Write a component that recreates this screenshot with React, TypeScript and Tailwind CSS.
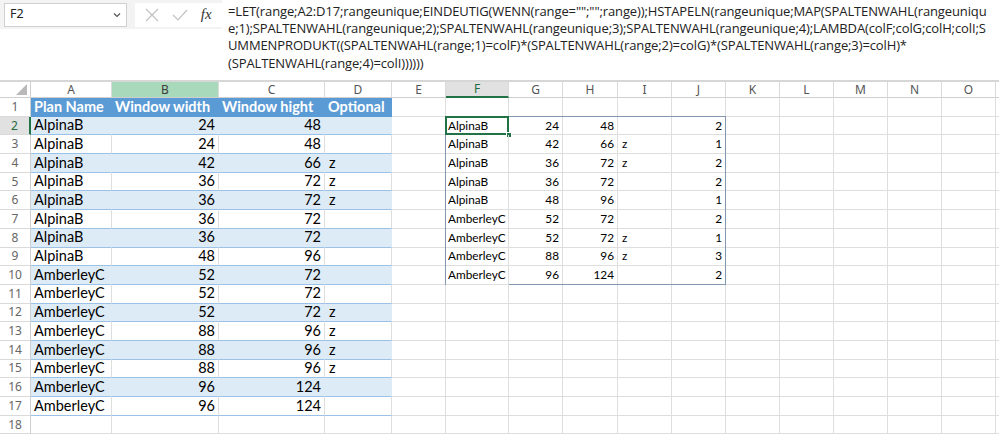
import React from "react";

type LeftRow = [string, number, number, string];
type RightRow = [string, number, number, string, number];

const leftRows: LeftRow[] = [
  ["AlpinaB", 24, 48, ""],
  ["AlpinaB", 24, 48, ""],
  ["AlpinaB", 42, 66, "z"],
  ["AlpinaB", 36, 72, "z"],
  ["AlpinaB", 36, 72, "z"],
  ["AlpinaB", 36, 72, ""],
  ["AlpinaB", 36, 72, ""],
  ["AlpinaB", 48, 96, ""],
  ["AmberleyC", 52, 72, ""],
  ["AmberleyC", 52, 72, ""],
  ["AmberleyC", 52, 72, "z"],
  ["AmberleyC", 88, 96, "z"],
  ["AmberleyC", 88, 96, "z"],
  ["AmberleyC", 88, 96, "z"],
  ["AmberleyC", 96, 124, ""],
  ["AmberleyC", 96, 124, ""],
];

const rightRows: RightRow[] = [
  ["AlpinaB", 24, 48, "", 2],
  ["AlpinaB", 42, 66, "z", 1],
  ["AlpinaB", 36, 72, "z", 2],
  ["AlpinaB", 36, 72, "", 2],
  ["AlpinaB", 48, 96, "", 1],
  ["AmberleyC", 52, 72, "", 2],
  ["AmberleyC", 52, 72, "z", 1],
  ["AmberleyC", 88, 96, "z", 3],
  ["AmberleyC", 96, 124, "", 2],
];

const letters = ["A", "B", "C", "D", "E", "F", "G", "H", "I", "J", "K", "L", "M", "N", "O"];

const formulaLines = [
  '=LET(range;A2:D17;rangeunique;EINDEUTIG(WENN(range="";"";range));HSTAPELN(rangeunique;MAP(SPALTENWAHL(rangeuniqu',
  "e;1);SPALTENWAHL(rangeunique;2);SPALTENWAHL(rangeunique;3);SPALTENWAHL(rangeunique;4);LAMBDA(colF;colG;colH;colI;S",
  "UMMENPRODUKT((SPALTENWAHL(range;1)=colF)*(SPALTENWAHL(range;2)=colG)*(SPALTENWAHL(range;3)=colH)*",
  "(SPALTENWAHL(range;4)=colI))))))",
];

const grid = "border-r border-b border-[#dedede]";
const cellFont = "font-['Lato',sans-serif] text-[14.5px] text-black leading-none";
const smallFont = "font-['Lato',sans-serif] text-[11.8px] text-black leading-none";

function FormulaBar() {
  return (
    <div className="flex h-[82px] border-b-2 border-[#d6d6d6] bg-white">
      <div className="w-[222px] shrink-0">
        <div className="flex h-[29px] items-center gap-[8px] bg-[#f3f3f3] pl-[4px]">
          <div className="flex h-[24px] w-[123px] items-center justify-between border border-[#d0d0d0] bg-white px-[5px]">
            <span className="font-['Noto_Sans',sans-serif] text-[12.5px] text-[#222]">F2</span>
            <svg width="8" height="6" viewBox="0 0 8 6">
              <path d="M1 1.5 L4 4.5 L7 1.5" stroke="#555" strokeWidth="1.2" fill="none" />
            </svg>
          </div>
          <div className="flex h-[24px] w-[87px] items-center justify-around bg-white px-[4px]">
            <svg width="14" height="14" viewBox="0 0 14 14">
              <path d="M1 1 L13 13 M13 1 L1 13" stroke="#c2c2c2" strokeWidth="1.2" />
            </svg>
            <svg width="16" height="12" viewBox="0 0 16 12">
              <path d="M1 6 L6 11 L15 1" stroke="#c2c2c2" strokeWidth="1.2" fill="none" />
            </svg>
            <span className="font-['Liberation_Serif',serif] text-[15px] italic text-[#333]">fx</span>
          </div>
        </div>
      </div>
      <div className="flex-1 overflow-hidden pl-[6px] pt-[3px] font-['Open_Sans',sans-serif] text-[13px] leading-[17.2px] tracking-[-0.12px] text-[#222]">
        {formulaLines.map((line, i) => (
          <div key={i} className="whitespace-nowrap">
            {line}
          </div>
        ))}
      </div>
    </div>
  );
}

function ColumnHeaders() {
  return (
    <>
      <div className="flex items-end justify-end border-r border-b border-[#cfcfcf] bg-white pr-[3px] pb-[2px]">
        <svg width="11" height="11" viewBox="0 0 11 11">
          <path d="M11 0 L11 11 L0 11 Z" fill="#b9b9b9" />
        </svg>
      </div>
      {letters.map((l) => {
        let cls = "bg-white text-[#555] border-b border-[#cfcfcf]";
        if (l === "B") cls = "bg-[#a9d9bb] text-[#3d3d3d] border-b border-[#cfcfcf]";
        if (l === "F") cls = "bg-[#e1e1e1] text-[#1f6b3e] border-b-2 border-[#217346]";
        return (
          <div
            key={l}
            className={`flex items-center justify-center border-r border-r-[#dadada] font-['Noto_Sans',sans-serif] text-[12px] ${cls}`}
          >
            {l}
          </div>
        );
      })}
      <div className="border-b border-[#cfcfcf] bg-white" />
    </>
  );
}

function RowHeader({ n }: { n: number }) {
  const selected = n === 2;
  return (
    <div
      className={
        selected
          ? "flex items-center justify-center border-r-2 border-b border-r-[#217346] border-b-[#dadada] bg-[#e1e1e1] font-['Noto_Sans',sans-serif] text-[12px] text-[#1f6b3e]"
          : "flex items-center justify-center border-r border-b border-r-[#cfcfcf] border-b-[#dadada] bg-white font-['Noto_Sans',sans-serif] text-[12px] text-[#666]"
      }
    >
      {n}
    </div>
  );
}

function LeftTableCells({ row }: { row: number }) {
  if (row === 1) {
    const heads = ["Plan Name", "Window width", "Window hight", "Optional"];
    return (
      <>
        {heads.map((h) => (
          <div
            key={h}
            className="flex items-center whitespace-nowrap bg-[#5b9bd5] pl-[3px] font-['Lato',sans-serif] text-[14.5px] leading-none font-bold text-white"
          >
            {h}
          </div>
        ))}
      </>
    );
  }
  if (row > 17) {
    return (
      <>
        <div className={grid} />
        <div className={grid} />
        <div className={grid} />
        <div className={grid} />
      </>
    );
  }
  const [name, w, h, opt] = leftRows[row - 2];
  const band = row % 2 === 0;
  const base = band
    ? "flex items-center bg-[#ddebf7] border-b border-b-[#9bc2e6] border-r border-r-[#ddebf7]"
    : "flex items-center bg-white border-b border-b-[#9bc2e6] border-r border-r-[#dedede]";
  return (
    <>
      <div className={`${base} pl-[3px] ${cellFont}`}>{name}</div>
      <div className={`${base} justify-end pr-[3px] ${cellFont}`}>{w}</div>
      <div className={`${base} justify-end pr-[3px] ${cellFont}`}>{h}</div>
      <div className={`${base} pl-[4px] ${cellFont}`}>{opt}</div>
    </>
  );
}

function RightTableCells({ row }: { row: number }) {
  if (row < 2 || row > 10) {
    return (
      <>
        <div className={grid} />
        <div className={grid} />
        <div className={grid} />
        <div className={grid} />
        <div className={grid} />
      </>
    );
  }
  const [name, g, h, i, j] = rightRows[row - 2];
  return (
    <>
      <div className={`relative flex items-center whitespace-nowrap pl-[2px] ${grid} ${smallFont}`}>
        {name}
        {row === 2 && (
          <>
            <div className="pointer-events-none absolute -top-px -left-px h-[169.3px] w-[281px] border border-[#8497b0]" />
            <div className="pointer-events-none absolute -top-px -left-px -right-px -bottom-px border-2 border-[#217346]" />
            <div className="pointer-events-none absolute -right-[4px] -bottom-[4px] h-[6px] w-[6px] border border-white bg-[#217346]" />
          </>
        )}
      </div>
      <div className={`flex items-center justify-end pr-[3px] ${grid} ${smallFont}`}>{g}</div>
      <div className={`flex items-center justify-end pr-[3px] ${grid} ${smallFont}`}>{h}</div>
      <div className={`flex items-center pl-[4px] ${grid} ${smallFont}`}>{i}</div>
      <div className={`flex items-center justify-end pr-[3px] ${grid} ${smallFont}`}>{j}</div>
    </>
  );
}

function SheetRow({ row }: { row: number }) {
  return (
    <>
      <RowHeader n={row} />
      <LeftTableCells row={row} />
      <div className={grid} />
      <RightTableCells row={row} />
      <div className={grid} />
      <div className={grid} />
      <div className={grid} />
      <div className={grid} />
      <div className={grid} />
      <div className="border-b border-[#dedede]" />
    </>
  );
}

export default function App() {
  const rows = Array.from({ length: 18 }, (_, i) => i + 1);
  return (
    <div className="h-[437px] w-[999px] overflow-hidden bg-white">
      <FormulaBar />
      <div className="grid grid-cols-[31px_81px_107px_106px_67px_54px_63px_54px_55px_54px_54px_54px_54px_54px_54px_54px_1fr] grid-rows-[16px_repeat(18,18.7px)]">
        <ColumnHeaders />
        {rows.map((r) => (
          <SheetRow key={r} row={r} />
        ))}
      </div>
    </div>
  );
}
